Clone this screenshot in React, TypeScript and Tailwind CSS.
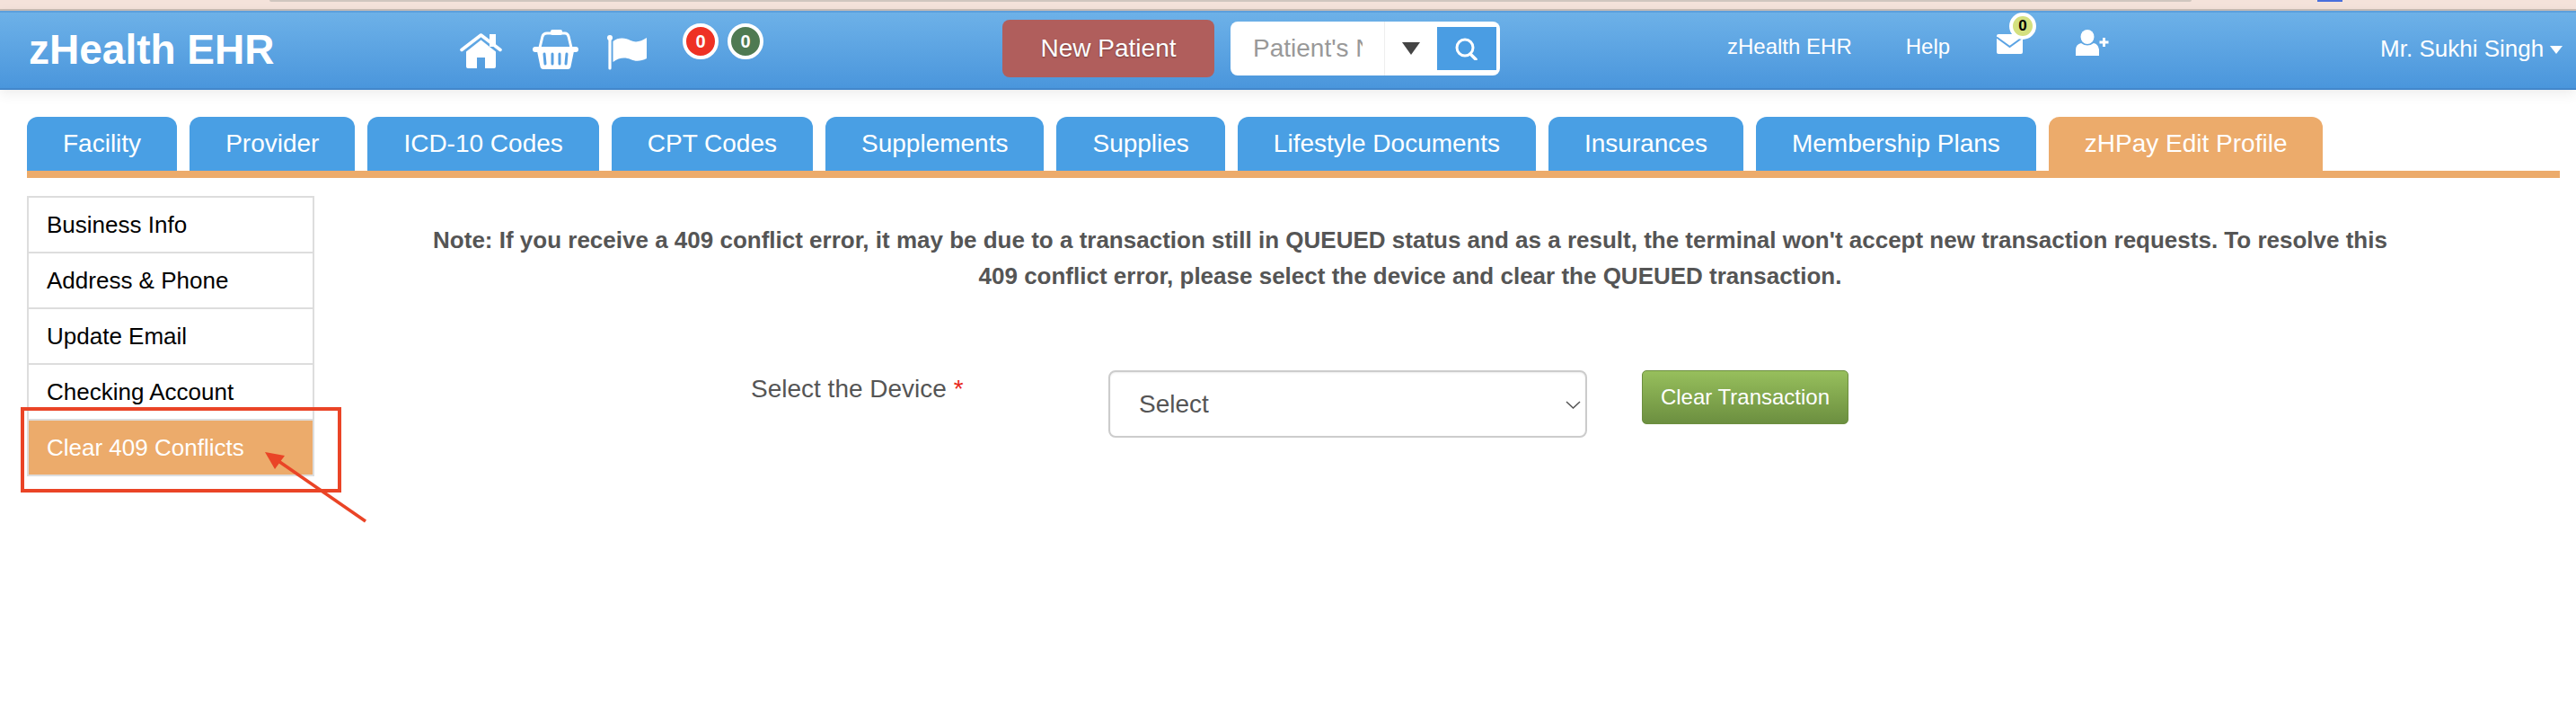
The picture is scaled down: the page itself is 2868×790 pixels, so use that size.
import React from 'react';

const tabs = ['Facility', 'Provider', 'ICD-10 Codes', 'CPT Codes', 'Supplements', 'Supplies', 'Lifestyle Documents', 'Insurances', 'Membership Plans'];
const sideItems = ['Business Info', 'Address & Phone', 'Update Email', 'Checking Account'];

function HomeIcon() {
	return (
		<svg width="47" height="39" viewBox="0 0 47 39" className="block">
			<path d="M33 1h7v14h-7z" fill="#fff" />
			<path d="M2 18.5 23.5 2 45 18.5" fill="none" stroke="#fff" strokeWidth="3.6" strokeLinecap="round" strokeLinejoin="round" />
			<path d="M23.5 7.5 40 20.5V37a2 2 0 0 1-2 2H28V27h-9v12H9a2 2 0 0 1-2-2V20.5z" fill="#fff" />
		</svg>
	);
}

function BasketIcon() {
	return (
		<svg width="51" height="45" viewBox="0 0 51 45" className="block">
			<path d="M8 21 11 8.500Q12 5 16 5H36Q39 5 40 8.500L43 21" fill="none" stroke="#fff" strokeWidth="3" />
			<rect x="20" y="1" width="13" height="6" rx="2" fill="#fff" />
			<rect x="0" y="20" width="51" height="6" rx="3" fill="#fff" />
			<path d="M5 25H46L42.500 42Q42 45 39 45H12Q9 45 8.500 42Z" fill="#fff" />
			<path d="M13 28l1 11M22 28v11M30 28v11M38 28l-1 11" stroke="#57a0e2" strokeWidth="3" strokeLinecap="round" />
		</svg>
	);
}

function FlagIcon() {
	return (
		<svg width="45" height="39" viewBox="0 0 45 39" className="block">
			<circle cx="4" cy="3" r="3" fill="#fff" />
			<path d="M4 3v34" stroke="#fff" strokeWidth="3.200" strokeLinecap="round" />
			<path d="M7.500 7C13 2 22 3 27 6c6 3 12 1 18-3v23c-6 3-12 4-18 1-6-2.500-13-2-19.500 3z" fill="#fff" />
		</svg>
	);
}

function MailIcon() {
	return (
		<svg width="29" height="22" viewBox="0 0 29 22" className="block">
			<rect width="29" height="22" rx="2" fill="#fff" />
			<path d="M0 3.500 14.500 14 29 3.500" fill="none" stroke="#5ba3e4" strokeWidth="2" />
		</svg>
	);
}

function UserPlusIcon() {
	return (
		<svg width="37" height="29" viewBox="0 0 37 29" className="block">
			<ellipse cx="13" cy="8" rx="7.500" ry="8" fill="#fff" />
			<path d="M0 29V23Q0 16 6 15Q13 20 20 15Q25 16 26 22V29Z" fill="#fff" />
			<path d="M31.500 9v10M26.500 14h10" stroke="#fff" strokeWidth="3" />
		</svg>
	);
}

function SearchIcon() {
	return (
		<svg width="26" height="25" viewBox="0 0 26 25" className="block">
			<circle cx="11" cy="11" r="9" fill="none" stroke="#fff" strokeWidth="3" />
			<path d="M17 18l6 6" stroke="#fff" strokeWidth="3.500" strokeLinecap="round" />
		</svg>
	);
}

function CountBadge({ className, value }: { className: string; value: string }) {
	return (
		<span className={`flex h-[40px] w-[40px] items-center justify-center rounded-full border-[4px] border-white text-[20px] font-bold text-white ${className}`}>
			{value}
		</span>
	);
}

export default function App() {
	return (
		<div className="relative min-h-[790px] overflow-hidden bg-white font-['Liberation_Sans',Arial,sans-serif]">
			{/* browser strip left in the screenshot */}
			<div className="h-[12px] border-b-2 border-[#c9bdb6] bg-[#f4e2da]">
				<div className="flex h-[2px]">
					<div className="ml-[300px] w-[2140px] rounded-b bg-[#d0c6bf]"></div>
					<div className="ml-[140px] w-[28px] bg-[#4a6fdc]"></div>
				</div>
			</div>

			<header className="relative flex h-[88px] items-start border-y-2 border-t-[#5c9fdc] border-b-[#4387cb] bg-gradient-to-b from-[#6db1e8] to-[#4a96dc] text-white shadow-[0_4px_14px_rgba(0,0,0,0.08)]">
				<div className="ml-[32px] mt-[14px] w-[480px] text-[46px] font-bold leading-[54px]">zHealth EHR</div>
				<div className="mt-[23px]"><HomeIcon /></div>
				<div className="ml-[34px] mt-[18px]"><BasketIcon /></div>
				<div className="ml-[31px] mt-[25px]"><FlagIcon /></div>
				<div className="ml-[40px] mt-[12px] flex gap-[10px]">
					<CountBadge className="bg-[#ee3124]" value="0" />
					<CountBadge className="bg-[#4f7a52]" value="0" />
				</div>
				<button className="ml-[266px] mt-[8px] h-[64px] w-[236px] rounded-[8px] bg-[#b05e5c] text-[28px] text-white [text-shadow:0_1px_2px_rgba(0,0,0,0.35)]">
					New Patient
				</button>
				<div className="ml-[18px] mt-[10px] flex h-[60px] w-[300px] items-center rounded-[8px] bg-white">
					<div className="ml-[25px] w-[122px] overflow-hidden whitespace-nowrap text-[28px] text-[#999]">Patient's Name</div>
					<div className="ml-[24px] flex h-full w-[59px] items-center justify-center border-l border-[#eee]">
						<span className="h-0 w-0 border-x-[10px] border-t-[14px] border-x-transparent border-t-[#444]"></span>
					</div>
					<div className="flex h-[48px] w-[66px] items-center justify-center bg-[#4a9de3]"><SearchIcon /></div>
				</div>
				<div className="ml-[253px] mt-[24px] text-[24px] leading-[28px]">zHealth EHR</div>
				<div className="ml-[60px] mt-[24px] text-[24px] leading-[28px]">Help</div>
				<div className="relative ml-[52px] mt-[24px]">
					<MailIcon />
					<span className="absolute left-[14px] top-[-24px] flex h-[30px] w-[30px] items-center justify-center rounded-full border-[4px] border-white bg-[#d4e07f] text-[17px] font-bold text-black">0</span>
				</div>
				<div className="ml-[59px] mt-[19px]"><UserPlusIcon /></div>
				<div className="ml-[302px] mt-[25px] flex items-center whitespace-nowrap text-[26px] leading-[30px]">
					Mr. Sukhi Singh
					<span className="ml-[7px] mt-[3px] h-0 w-0 border-x-[7px] border-t-[9px] border-x-transparent border-t-white"></span>
				</div>
			</header>

			<nav className="ml-[30px] mr-[18px] mt-[30px] flex gap-[14px] border-b-[8px] border-[#ecab6b]">
				{tabs.map((tab) => (
					<div key={tab} className="flex h-[60px] items-center rounded-t-[12px] bg-[#499fe4] px-[40px] text-[28px] text-white">
						{tab}
					</div>
				))}
				<div className="flex h-[60px] items-center rounded-t-[12px] bg-[#ecab6b] px-[40px] text-[28px] text-white">zHPay Edit Profile</div>
			</nav>

			<div className="mt-[20px] flex">
				<aside className="ml-[30px] w-[320px] shrink-0 self-start border-2 border-t-2 border-[#ddd]">
					{sideItems.map((item) => (
						<div key={item} className="flex h-[62px] items-center border-b-2 border-[#ddd] pl-[20px] text-[26px] text-black">
							{item}
						</div>
					))}
					<div className="flex h-[60px] items-center bg-[#ecab6b] pl-[20px] text-[26px] text-white">Clear 409 Conflicts</div>
				</aside>

				<main className="w-[2440px] pt-[29px]">
					<p className="mx-auto w-[2220px] text-center text-[26px] font-bold leading-[40px] text-[#555]">
						Note: If you receive a 409 conflict error, it may be due to a transaction still in QUEUED status and as a result, the terminal won't accept new transaction requests. To resolve this 409 conflict error, please select the device and clear the QUEUED transaction.
					</p>
					<div className="ml-[486px] mt-[85px] flex items-start">
						<label className="w-[398px] pt-px text-[28px] leading-[40px] text-[#555]">
							Select the Device <span className="text-[#e8291c]">*</span>
						</label>
						<div className="relative w-[533px]">
							<select className="h-[75px] w-full appearance-none rounded-[8px] border-2 border-[#ccc] bg-white pl-[32px] text-[28px] text-[#555] shadow-[inset_0_1px_2px_rgba(0,0,0,0.08)]">
								<option>Select</option>
							</select>
							<svg width="17" height="9" viewBox="0 0 17 9" className="pointer-events-none absolute right-[7px] top-[34px]">
								<path d="M1 1l7.500 7L16 1" fill="none" stroke="#555" strokeWidth="1.500" />
							</svg>
						</div>
						<button className="ml-[61px] h-[60px] w-[230px] rounded-[5px] border border-[#6c8e3f] bg-gradient-to-b from-[#97bf5c] to-[#6c8f40] text-[24px] text-white">
							Clear Transaction
						</button>
					</div>
				</main>
			</div>

			{/* annotation drawn over the screenshot */}
			<div className="absolute left-[23px] top-[453px] h-[95px] w-[357px] border-[4px] border-[#ea4426]"></div>
			<svg width="130" height="95" viewBox="0 0 130 95" className="absolute left-[285px] top-[495px]">
				<path d="M10 8 32 12 21 27z" fill="#ea4426" />
				<path d="M25 18 122 85" stroke="#ea4426" strokeWidth="3.500" />
			</svg>
		</div>
	);
}
